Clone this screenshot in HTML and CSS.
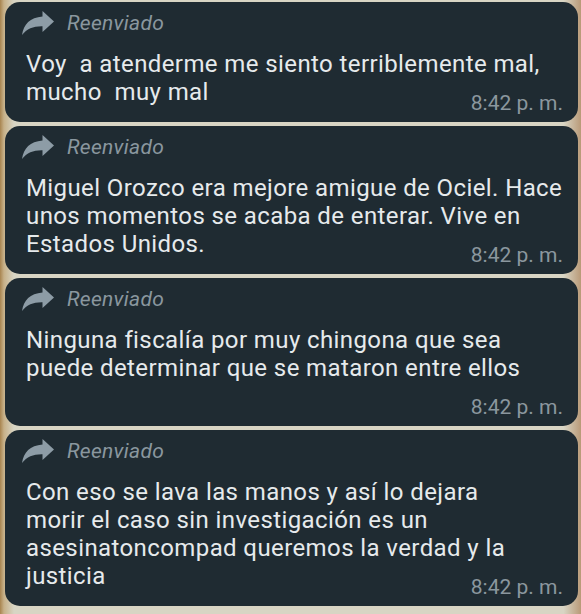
FILE: index.html
```html
<!DOCTYPE html>
<html lang="es">
<head>
    <meta charset="UTF-8">
    <meta name="viewport" content="width=device-width, initial-scale=1.0">
    <title>Mensajes reenviados</title>
    <link rel="stylesheet" href="styles.css">
</head>
<body>
    <div class="chat">
        <div class="bubble">
            <div class="forwarded">
                <svg class="fwd-icon" viewBox="0 0 32 24" width="32" height="24"><path d="M20.5 0 L32 10.5 L20.5 21 V15.2 C11.5 15 5 17.6 0 24 C1.6 13 8 6.4 20.5 5.4 Z"/></svg>
                <span>Reenviado</span>
            </div>
            <div class="text">Voy  a atenderme me siento terriblemente mal,<br>mucho  muy mal</div>
            <div class="meta">8:42 p. m.</div>
        </div>

        <div class="bubble">
            <div class="forwarded">
                <svg class="fwd-icon" viewBox="0 0 32 24" width="32" height="24"><path d="M20.5 0 L32 10.5 L20.5 21 V15.2 C11.5 15 5 17.6 0 24 C1.6 13 8 6.4 20.5 5.4 Z"/></svg>
                <span>Reenviado</span>
            </div>
            <div class="text">Miguel Orozco era mejore amigue de Ociel. Hace<br>unos momentos se acaba de enterar. Vive en<br>Estados Unidos.</div>
            <div class="meta">8:42 p. m.</div>
        </div>

        <div class="bubble">
            <div class="forwarded">
                <svg class="fwd-icon" viewBox="0 0 32 24" width="32" height="24"><path d="M20.5 0 L32 10.5 L20.5 21 V15.2 C11.5 15 5 17.6 0 24 C1.6 13 8 6.4 20.5 5.4 Z"/></svg>
                <span>Reenviado</span>
            </div>
            <div class="text">Ninguna fiscalía por muy chingona que sea<br>puede determinar que se mataron entre ellos<br><br></div>
            <div class="meta">8:42 p. m.</div>
        </div>

        <div class="bubble">
            <div class="forwarded">
                <svg class="fwd-icon" viewBox="0 0 32 24" width="32" height="24"><path d="M20.5 0 L32 10.5 L20.5 21 V15.2 C11.5 15 5 17.6 0 24 C1.6 13 8 6.4 20.5 5.4 Z"/></svg>
                <span>Reenviado</span>
            </div>
            <div class="text">Con eso se lava las manos y así lo dejara<br>morir el caso sin investigación es un<br>asesinatoncompad queremos la verdad y la<br>justicia</div>
            <div class="meta">8:42 p. m.</div>
        </div>
    </div>
</body>
</html>
```

FILE: styles.css
```css
body {
    margin: 0;
    font-family: Roboto, "Noto Sans", Arial, sans-serif;
    background: linear-gradient(to right, #a8844f 0, #c7b189 4px, #d8d5c4 14px, #d8d5c4 97%, #b99a78 100%);
    height: 100vh;
    overflow: hidden;
}
.chat {
    display: flex;
    flex-direction: column;
    gap: 4px;
    padding: 2px 3px 0 5px;
}
.bubble {
    background-color: #1f2b32;
    border-radius: 15px;
    padding: 6px 15px 7px 21px;
}
.forwarded {
    display: flex;
    align-items: center;
    height: 30px;
    color: #8a979f;
    font-size: 21px;
    font-style: italic;
    letter-spacing: 0.3px;
}
.fwd-icon {
    fill: #8d9ca6;
    margin-left: -4px;
    margin-right: 13px;
}
.text {
    margin-top: 12px;
    color: #e6eaec;
    font-size: 24px;
    letter-spacing: 0.4px;
    line-height: 28px;
    white-space: pre;
}
.meta {
    margin-top: -15px;
    text-align: right;
    color: #8b979e;
    font-size: 21px;
    line-height: 24px;
}
```
